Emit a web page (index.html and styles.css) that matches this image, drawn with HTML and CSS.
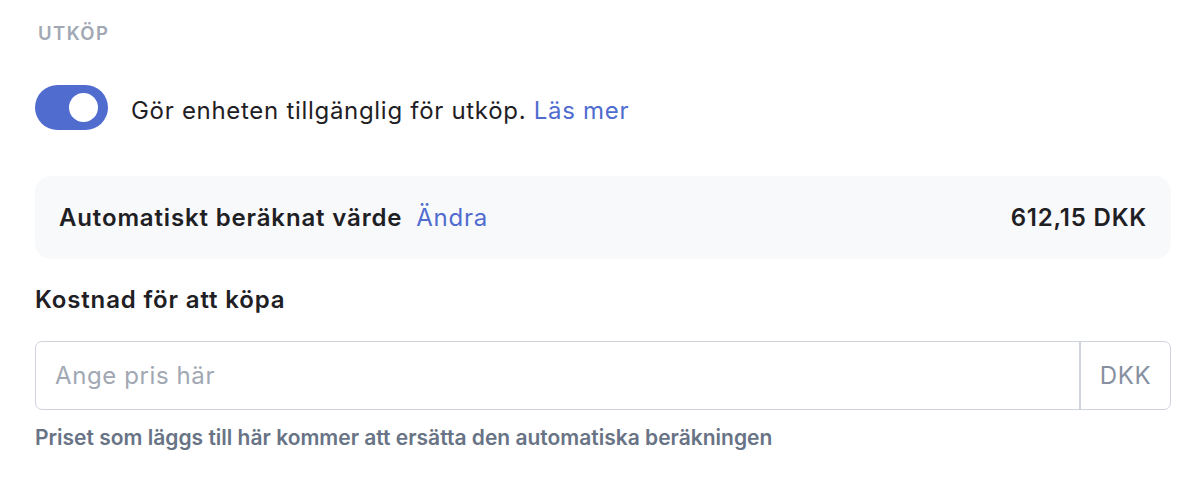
FILE: index.html
```html
<!DOCTYPE html>
<html lang="sv">
<head>
<meta charset="utf-8">
<link rel="stylesheet" href="styles.css">
</head>
<body>
<div class="page">
  <div class="section-title">UTKÖP</div>
  <div class="toggle-row">
    <span class="toggle"><span class="knob"></span></span>
    <span class="toggle-label">Gör enheten tillgänglig för utköp. <a class="link" href="#">Läs mer</a></span>
  </div>
  <div class="auto-box">
    <div class="auto-left"><span class="auto-title">Automatiskt beräknat värde</span><a class="link" href="#">Ändra</a></div>
    <div class="auto-value">612,15 DKK</div>
  </div>
  <div class="field-label">Kostnad för att köpa</div>
  <div class="input-group">
    <input class="input" type="text" placeholder="Ange pris här">
    <span class="addon">DKK</span>
  </div>
  <div class="help">Priset som läggs till här kommer att ersätta den automatiska beräkningen</div>
</div>
</body>
</html>
```
FILE: styles.css
```css
* { box-sizing: border-box; }
html, body { margin: 0; padding: 0; background: #fff; }
body { font-family: Inter, "Noto Sans", sans-serif; color: #1f2024; }
.page { padding: 22px 31px 0 35px; width: 1202px; }
.section-title {
  font-size: 18.5px; font-weight: 600; color: #a1a8b3; letter-spacing: 1.4px;
  padding-left: 3px; line-height: 22px;
}
.toggle-row { display: flex; align-items: center; gap: 23px; margin-top: 41px; }
.toggle {
  width: 73px; height: 45px; border-radius: 23px; background: #506ccf;
  display: flex; align-items: center; justify-content: flex-end; padding-right: 10px;
}
.knob { width: 29px; height: 29px; border-radius: 50%; background: #fff; }
.toggle-label { font-size: 24px; color: #1f2024; line-height: 30px; margin-top: 6px; letter-spacing: 0.7px; }
.link { color: #506ccf; text-decoration: none; font-weight: 400; }
.auto-box {
  margin-top: 46px; height: 83px; background: #f8f9fb; border-radius: 16px;
  display: flex; align-items: center; justify-content: space-between; padding: 0 24px;
}
.auto-left { display: flex; align-items: baseline; gap: 14px; font-size: 24px; letter-spacing: 0.85px; }
.auto-left .link { letter-spacing: 0.7px; }
.auto-title { font-weight: 600; color: #1f2024; }
.auto-value { font-size: 24px; font-weight: 600; color: #1f2024; letter-spacing: 0.8px; }
.field-label { font-size: 24px; font-weight: 600; margin-top: 26px; line-height: 30px; letter-spacing: 0.85px; }
.input-group {
  margin-top: 26px; display: flex; height: 69px; border: 1px solid #cfd4dc; border-radius: 7px;
}
.input {
  flex: 1; border: 0; outline: 0; background: transparent; padding: 0 19px;
  font-family: inherit; font-size: 24px; color: #1f2024; border-radius: 7px 0 0 7px; letter-spacing: 0.6px;
}
.input::placeholder { color: #a1a8b3; }
.addon {
  width: 91px; border-left: 2px solid #cfd4dc; display: flex; align-items: center;
  justify-content: center; font-size: 24px; color: #8690a0; letter-spacing: 0.6px;
}
.help { margin-top: 15px; font-size: 21px; font-weight: 600; color: #687385; line-height: 26px; }
```
